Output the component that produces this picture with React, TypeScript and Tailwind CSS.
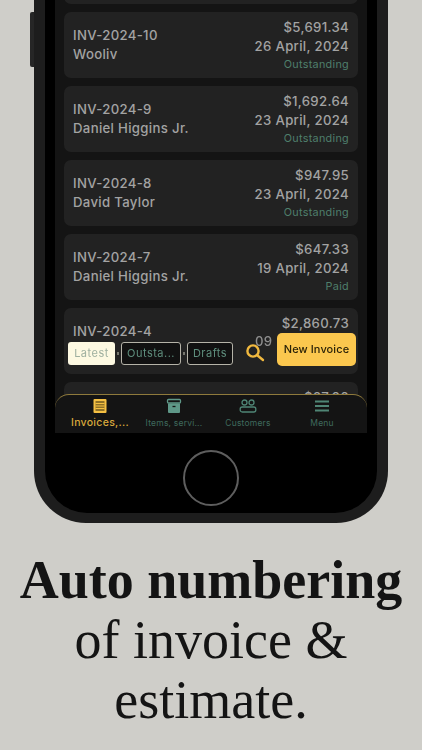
const invoices = [
  { id: '', name: '', amount: '', date: '', status: '' },
  { id: 'INV-2024-10', name: 'Wooliv', amount: '$5,691.34', date: '26 April, 2024', status: 'Outstanding' },
  { id: 'INV-2024-9', name: 'Daniel Higgins Jr.', amount: '$1,692.64', date: '23 April, 2024', status: 'Outstanding' },
  { id: 'INV-2024-8', name: 'David Taylor', amount: '$947.95', date: '23 April, 2024', status: 'Outstanding' },
  { id: 'INV-2024-7', name: 'Daniel Higgins Jr.', amount: '$647.33', date: '19 April, 2024', status: 'Paid' },
  { id: 'INV-2024-4', name: '', amount: '$2,860.73', date: '', status: '' },
  { id: '', name: '', amount: '$27.06', date: '', status: '' },
];

const InvoiceCard = ({ invoice }: { invoice: (typeof invoices)[number] }) => (
  <div className="flex h-[66px] shrink-0 items-center justify-between rounded-[7px] bg-[#222222] px-[9px] text-[13.2px] font-medium leading-[19px] tracking-[0.32px] text-[#a3a3a3]">
    <div className="flex flex-col">
      <span className="h-[19px]">{invoice.id}</span>
      <span className="h-[19px]">{invoice.name}</span>
    </div>
    <div className="flex h-full flex-col items-end pt-[6px]">
      <span>{invoice.amount}</span>
      <span>{invoice.date}</span>
      <span className="text-[10.8px] font-normal leading-[17px] tracking-[0.3px] text-[#4f7f6c]">{invoice.status}</span>
    </div>
  </div>
);

const Chip = ({ label, className }: { label: string; className: string }) => (
  <span className={`flex h-[23px] items-center justify-center rounded-[3px] text-[11px] tracking-[0.5px] ${className}`}>
    {label}
  </span>
);

const outlined = 'border-[1.5px] border-[#b5b3a8] bg-[#111111] text-[#5f8f7e]';

const Dot = () => <span className="h-[3px] w-[2px] bg-[#77776f]" />;

const InvoicesIcon = () => (
  <svg width="16" height="16" viewBox="0 0 16 16" fill="none">
    <rect x="1.5" y="1" width="13" height="14" rx="1" fill="#f5c043" />
    <rect x="3.500" y="3" width="9" height="10" fill="#8f7126" />
    <path d="M3.500 5.500h9M3.500 8h9M3.500 10.500h9" stroke="#f5c043" strokeWidth="1" />
  </svg>
);

const ItemsIcon = () => (
  <svg width="16" height="16" viewBox="0 0 16 16">
    <rect x="1.500" y="1.500" width="13" height="3.500" rx="1" fill="#141414" stroke="#5f9888" strokeWidth="1.300" />
    <path d="M2 5.500h12v8.500a1 1 0 0 1-1 1H3a1 1 0 0 1-1-1z" fill="#5f9888" />
    <path d="M6.500 8.500h3" stroke="#141414" strokeWidth="1.300" />
  </svg>
);

const CustomersIcon = () => (
  <svg width="18" height="16" viewBox="0 0 18 16" fill="none" stroke="#4f8575" strokeWidth="1.300">
    <circle cx="5.500" cy="4.500" r="2.500" />
    <circle cx="12.500" cy="4.500" r="2.500" />
    <rect x="1.200" y="9" width="15.600" height="5" rx="2" />
  </svg>
);

const MenuIcon = () => (
  <svg width="16" height="16" viewBox="0 0 16 16" stroke="#4f8575" strokeWidth="1.800">
    <path d="M1 3.500h14M1 8h14M1 12.500h14" />
  </svg>
);

const SearchIcon = () => (
  <svg width="20" height="20" viewBox="0 0 20 20" fill="none" stroke="#f1b93f" strokeWidth="2.4" strokeLinecap="round">
    <circle cx="8" cy="8" r="5.6" />
    <path d="M12.500 12.500l5.500 4.500" />
  </svg>
);

const tabs = [
  { label: 'Invoices,...', icon: <InvoicesIcon />, className: 'text-[10.5px] font-medium tracking-[0.3px] text-[#d9a93c]' },
  { label: 'Items, servi...', icon: <ItemsIcon />, className: 'text-[8.5px] tracking-[0.2px] text-[#3f6a5d]' },
  { label: 'Customers', icon: <CustomersIcon />, className: 'text-[8.5px] tracking-[0.2px] text-[#3f6a5d]' },
  { label: 'Menu', icon: <MenuIcon />, className: 'text-[8.5px] tracking-[0.2px] text-[#3f6a5d]' },
];

export default function App() {
  return (
    <div className="flex h-[750px] w-[422px] flex-col items-center overflow-hidden bg-[#cfcec9] font-['Inter',sans-serif]">
      <div className="relative flex h-[523px] w-[354px] shrink-0 rounded-b-[52px] bg-[#1d1d1d] px-[11px] pb-[10px]">
        {/* side button */}
        <div className="absolute left-[-4px] top-[12px] h-[55px] w-[4px] rounded-l-[2px] bg-[#262626]" />
        <div className="flex w-full flex-col items-center rounded-b-[42px] bg-black px-[10px] blur-[0.4px]">
          <div className="relative h-[433px] w-full shrink-0 overflow-hidden bg-[#141414]">
            <div className="mx-[9px] mt-[-62px] flex flex-col gap-2">
              {invoices.map((invoice, i) => (
                <InvoiceCard key={i} invoice={invoice} />
              ))}
            </div>
            <div className="absolute inset-x-0 bottom-0 flex flex-col">
              <div className="relative mb-[28px] flex items-center pl-[13px] pr-[11px]">
                <div className="mt-[7px] flex items-center gap-[2px]">
                  <Chip label="Latest" className="w-[47px] bg-[#fdf9e2] text-[#9fb0a0]" />
                  <Dot />
                  <Chip label="Outsta..." className={`w-[60px] ${outlined}`} />
                  <Dot />
                  <Chip label="Drafts" className={`w-[46px] ${outlined}`} />
                </div>
                <div className="ml-auto flex items-center">
                  <div className="relative mr-[12px] mt-[6px]">
                    <SearchIcon />
                    <span className="absolute left-[10px] top-[-11px] text-[13.2px] font-medium tracking-[0.3px] text-[#8e8e8e]">09</span>
                  </div>
                  <button className="h-[33px] w-[79px] rounded-[5px] bg-[#fbc74e] text-[11px] font-medium tracking-[0.1px] text-[#2a2208]">
                    New Invoice
                  </button>
                </div>
              </div>
              <div className="grid h-[39px] grid-cols-4 rounded-t-[14px] border-t-[1.5px] border-[#8f7a3c] bg-[#141414] px-[8px]">
                {tabs.map((tab) => (
                  <div key={tab.label} className="flex flex-col items-center pt-[3px]">
                    {tab.icon}
                    <span className={`mt-[2px] leading-[14px] ${tab.className}`}>{tab.label}</span>
                  </div>
                ))}
              </div>
            </div>
          </div>
          <div className="mt-[17px] h-[56px] w-[56px] rounded-full border-2 border-[#5e5e5e]" />
        </div>
      </div>
      <div className="mt-[27px] text-center font-['Liberation_Serif',serif] text-[54px] leading-[60px] text-[#141414]">
        <div className="font-bold">Auto numbering</div>
        <div>of invoice &amp;</div>
        <div>estimate.</div>
      </div>
    </div>
  );
}
